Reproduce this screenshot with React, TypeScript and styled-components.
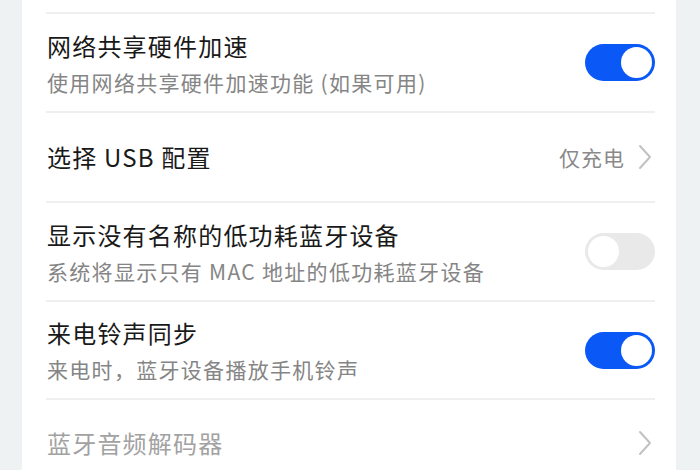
import styled, {createGlobalStyle} from "styled-components";

const GlobalStyle = createGlobalStyle`
  html, body {
    margin: 0;
    padding: 0;
    background: #eef2f3;
    font-family: "Noto Sans CJK SC", "Noto Sans", sans-serif;
  }
`;

// 스타일
const Page = styled.div`
  width: 700px;
  height: 470px;
  overflow: hidden;
  background: #eef2f3;
`;
const Card = styled.section`
  margin: 0 24px 0 22px;
  background: #ffffff;
  padding: 0 21px 0 24px;
  height: 470px;
  box-sizing: border-box;
`;
const Tail = styled.div`
  height: 12px;
  border-bottom: 2px solid #efefef;
`;
const Row = styled.div<{ $height: number }>`
  height: ${p => p.$height}px;
  display: flex;
  align-items: center;
  justify-content: space-between;
  border-bottom: 2px solid #efefef;
  box-sizing: border-box;

  &:last-child {
    border-bottom: none;
  }
`;
const Texts = styled.div`
  display: flex;
  flex-direction: column;
  gap: 6px;
  padding-left: 1px;
`;
const Title = styled.div<{ $disabled?: boolean }>`
  font-size: 24px;
  line-height: 32px;
  color: ${p => (p.$disabled ? "#a2a2a2" : "#191919")};
  letter-spacing: 1.2px;
`;
const Sub = styled.div`
  font-size: 21px;
  line-height: 28px;
  color: #858585;
  letter-spacing: 1.3px;
`;
const Right = styled.div`
  display: flex;
  align-items: center;
  gap: 13px;
  font-size: 21px;
  letter-spacing: 1px;
  color: #8a8a8a;
  padding-right: 3px;
`;
const Track = styled.div<{ $on: boolean }>`
  width: 70px;
  height: 37px;
  border-radius: 19px;
  background: ${p => (p.$on ? "#0a59f7" : "#e9e9e9")};
  display: flex;
  align-items: center;
  justify-content: ${p => (p.$on ? "flex-end" : "flex-start")};
  padding: 0 3px;
  box-sizing: border-box;
`;
const Knob = styled.div`
  width: 31px;
  height: 31px;
  border-radius: 50%;
  background: #ffffff;
`;

function Chevron() {
  return (
    <svg width="14" height="26" viewBox="0 0 14 26">
      <path d="M2 2 L12 13 L2 24" fill="none" stroke="#c2c2c2" strokeWidth="2" strokeLinecap="round" strokeLinejoin="round" />
    </svg>
  );
}

function Toggle({on}: { on: boolean }) {
  return (
    <Track $on={on}>
      <Knob />
    </Track>
  );
}

export default function App() {
  return (
    <Page>
      <GlobalStyle />
      <Card>
        <Tail />
        <Row $height={99}>
          <Texts>
            <Title>网络共享硬件加速</Title>
            <Sub>使用网络共享硬件加速功能 (如果可用)</Sub>
          </Texts>
          <Toggle on />
        </Row>
        <Row $height={90}>
          <Texts>
            <Title>选择 USB 配置</Title>
          </Texts>
          <Right>
            仅充电
            <Chevron />
          </Right>
        </Row>
        <Row $height={99}>
          <Texts>
            <Title>显示没有名称的低功耗蓝牙设备</Title>
            <Sub>系统将显示只有 MAC 地址的低功耗蓝牙设备</Sub>
          </Texts>
          <Toggle on={false} />
        </Row>
        <Row $height={98}>
          <Texts>
            <Title>来电铃声同步</Title>
            <Sub>来电时，蓝牙设备播放手机铃声</Sub>
          </Texts>
          <Toggle on />
        </Row>
        <Row $height={86}>
          <Texts>
            <Title $disabled>蓝牙音频解码器</Title>
          </Texts>
          <Right>
            <Chevron />
          </Right>
        </Row>
      </Card>
    </Page>
  );
}
